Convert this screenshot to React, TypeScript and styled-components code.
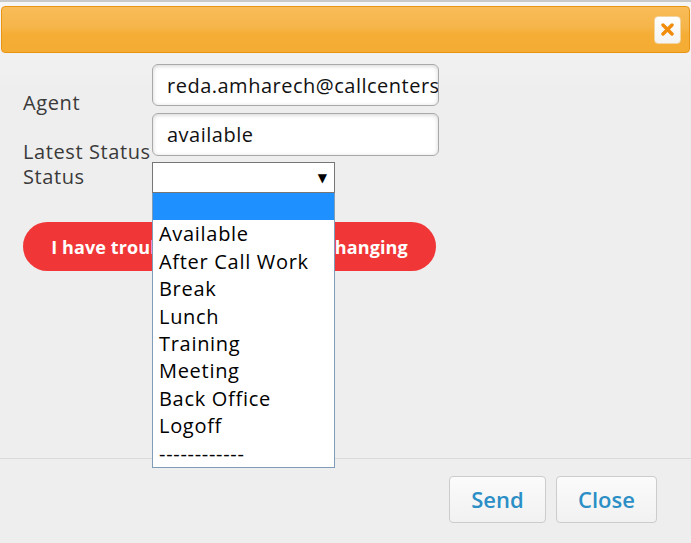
import React from "react";
import styled, { createGlobalStyle } from "styled-components";

const GlobalStyle = createGlobalStyle`
  html, body {
    margin: 0;
    padding: 0;
    background: #eeeeee;
  }
  body {
    font-family: "Open Sans", "DejaVu Sans", sans-serif;
    color: #333;
  }
`;

const Dialog = styled.div`
  width: 691px;
  height: 543px;
  display: flex;
  flex-direction: column;
  background: linear-gradient(#f6f6f6 0px, #eeeeee 90px);
  overflow: hidden;
`;

const TopStrip = styled.div`
  height: 2px;
  background: #c9c9c9;
`;

const Header = styled.div`
  margin: 4px 1px 0 1px;
  height: 45px;
  border: 1px solid #ea9414;
  border-radius: 4px;
  background: linear-gradient(180deg, #f8bc58 0%, #f6b54a 45%, #f5ad36 60%, #f4ac33 100%);
  display: flex;
  align-items: center;
  justify-content: flex-end;
  padding-right: 8px;
`;

const CloseIcon = styled.button`
  width: 27px;
  height: 28px;
  border: 1px solid #f2d3a2;
  border-radius: 4px;
  background: linear-gradient(#ffffff, #f3f3f3);
  display: flex;
  align-items: center;
  justify-content: center;
  padding: 0;
`;

const Body = styled.div`
  flex: 1;
  padding: 11px 0 0 23px;
  display: flex;
  flex-direction: column;
`;

const Row = styled.div<{ $gap?: number }>`
  display: flex;
  margin-top: ${(p) => p.$gap ?? 0}px;
`;

const Label = styled.label<{ $align: "end" | "start"; $shift: number }>`
  width: 129px;
  font-size: 20px;
  line-height: 24px;
  letter-spacing: 0.6px;
  color: #3a3a3a;
  white-space: nowrap;
  align-self: ${(p) => (p.$align === "end" ? "flex-end" : "flex-start")};
  margin-bottom: ${(p) => (p.$align === "end" ? -p.$shift : 0)}px;
  margin-top: ${(p) => (p.$align === "start" ? p.$shift : 0)}px;
`;

const TextInput = styled.div<{ $h: number }>`
  width: 287px;
  height: ${(p) => p.$h}px;
  box-sizing: border-box;
  border: 1px solid #a9a9a9;
  border-radius: 6px;
  background: #fff;
  box-shadow: inset 0 1px 4px rgba(0, 0, 0, 0.18);
  padding: 0 0 0 14px;
  font-size: 20px;
  letter-spacing: 0.5px;
  color: #111;
  display: flex;
  align-items: center;
  overflow: hidden;
  white-space: nowrap;
`;

const SelectWrap = styled.div`
  position: relative;
  width: 183px;
`;

const SelectBox = styled.div`
  height: 31px;
  box-sizing: border-box;
  border: 1px solid #767676;
  background: #fff;
  display: flex;
  align-items: center;
  justify-content: flex-end;
  padding-right: 7px;
  font-size: 12px;
  color: #000;
`;

const OptionList = styled.ul`
  position: absolute;
  top: 31px;
  left: 0;
  width: 183px;
  box-sizing: border-box;
  margin: 0;
  padding: 0;
  list-style: none;
  background: #fff;
  border: 1px solid #7f9db9;
  border-top: none;
  z-index: 10;
`;

const Option = styled.li<{ $active?: boolean }>`
  height: 27.4px;
  line-height: 27.4px;
  padding-left: 6px;
  font-size: 20px;
  letter-spacing: 0.7px;
  color: #000;
  background: ${(p) => (p.$active ? "#1e90ff" : "transparent")};
  white-space: nowrap;
`;

const TroubleButton = styled.button`
  margin-top: 29px;
  width: 413px;
  height: 49px;
  border: none;
  border-radius: 25px;
  background: #f03637;
  color: #fff;
  font-family: inherit;
  font-size: 18px;
  font-weight: 700;
  letter-spacing: 0.1px;
  text-align: center;
  white-space: nowrap;
`;

const Footer = styled.div`
  border-top: 1px solid #dadada;
  height: 85px;
  box-sizing: border-box;
  padding: 17px 34px 0 0;
  display: flex;
  justify-content: flex-end;
  gap: 10px;
`;

const FooterButton = styled.button<{ $w: number }>`
  width: ${(p) => p.$w}px;
  height: 47px;
  border: 1px solid #cccccc;
  border-radius: 4px;
  background: linear-gradient(#fbfbfb, #f1f1f1);
  color: #2b8fc6;
  font-family: inherit;
  font-size: 22px;
  font-weight: 600;
  padding-bottom: 3px;
`;

const options = [
  "Available",
  "After Call Work",
  "Break",
  "Lunch",
  "Training",
  "Meeting",
  "Back Office",
  "Logoff",
  "------------",
];

export default function App() {
  return (
    <>
      <GlobalStyle />
      <Dialog>
        <TopStrip />
        <Header>
          <CloseIcon aria-label="close">
            <svg width="13" height="13" viewBox="0 0 13 13">
              <path
                d="M2 2 L11 11 M11 2 L2 11"
                stroke="#f08c0a"
                strokeWidth="3.4"
                strokeLinecap="round"
              />
            </svg>
          </CloseIcon>
        </Header>
        <Body>
          <Row>
            <Label $align="end" $shift={9}>Agent</Label>
            <TextInput $h={42}>reda.amharech@callcenters.com</TextInput>
          </Row>
          <Row $gap={7}>
            <Label $align="end" $shift={8}>Latest Status</Label>
            <TextInput $h={43}>available</TextInput>
          </Row>
          <Row $gap={6}>
            <Label $align="start" $shift={3}>Status</Label>
            <SelectWrap>
              <SelectBox>▼</SelectBox>
              <OptionList>
                <Option $active>&nbsp;</Option>
                {options.map((o) => (
                  <Option key={o}>{o}</Option>
                ))}
              </OptionList>
            </SelectWrap>
          </Row>
          <TroubleButton>I have trouble with the status changing</TroubleButton>
        </Body>
        <Footer>
          <FooterButton $w={97}>Send</FooterButton>
          <FooterButton $w={101}>Close</FooterButton>
        </Footer>
      </Dialog>
    </>
  );
}
